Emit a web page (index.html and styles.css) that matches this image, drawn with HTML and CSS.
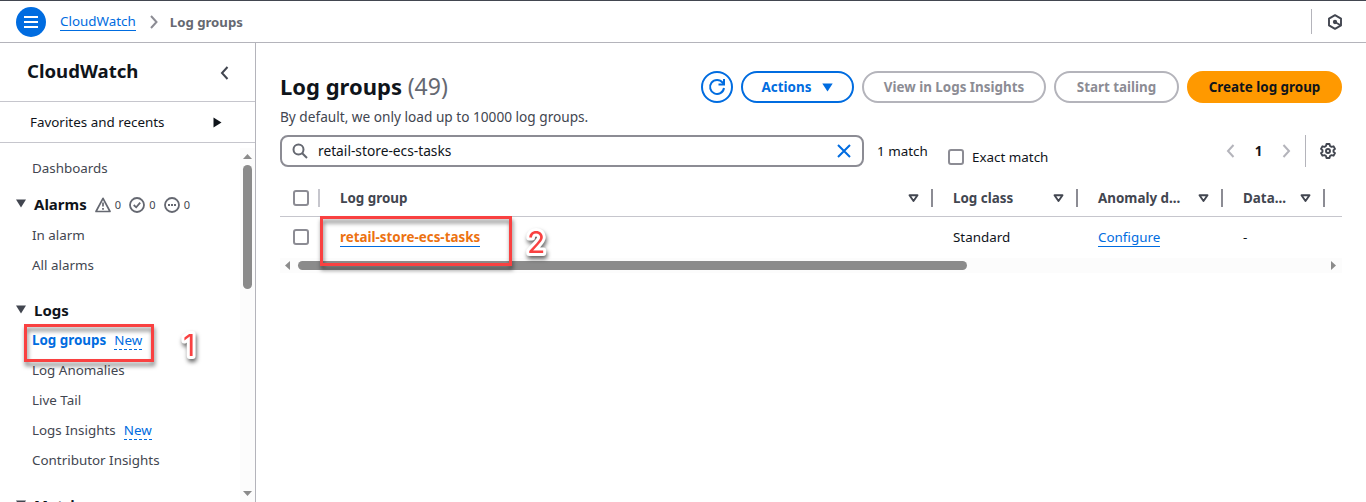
FILE: index.html
```html
<!DOCTYPE html>
<html lang="en">
<head>
<meta charset="utf-8">
<title>CloudWatch - Log groups</title>
<link rel="stylesheet" href="styles.css">
</head>
<body>
<div class="app">
  <header class="topbar">
    <button class="menu-btn" aria-label="Menu"><svg width="14" height="12" viewBox="0 0 14 12" stroke="#fff" stroke-width="2"><path d="M0 1h14M0 6h14M0 11h14"/></svg></button>
    <nav class="crumbs">
      <a class="link crumb-link">CloudWatch</a>
      <svg class="crumb-sep" width="8" height="14" viewBox="0 0 8 14" fill="none" stroke="#8c8c94" stroke-width="2"><path d="M1 1l5.500 6L1 13"/></svg>
      <span class="crumb-current">Log groups</span>
    </nav>
    <div class="topbar-tools">
      <svg width="16" height="16" viewBox="0 0 16 16" fill="none" stroke="#424650" stroke-width="1.900" stroke-linejoin="round"><path d="M8 1.200l6 3.400v6.800l-6 3.400-6-3.400V4.600z"/><path d="M8 8l5.500 3.200"/><circle cx="8" cy="8" r="1.200" fill="#424650"/></svg>
    </div>
  </header>
  <div class="body">
    <aside class="sidebar">
      <div class="side-head"><h2 class="side-title">CloudWatch</h2><svg class="collapse" width="9" height="14" viewBox="0 0 9 14" fill="none" stroke="#424650" stroke-width="2"><path d="M7.500 1L2 7l5.500 6"/></svg></div>
      <div class="favorites"><span>Favorites and recents</span><svg width="9" height="11" viewBox="0 0 9 11"><path d="M0.500 0.500v10L8.500 5.500z" fill="#0f141a"/></svg></div>
      <div class="side-scroll">
        <div class="nav-list">
          <a class="nav-item">Dashboards</a>
          <div class="nav-group alarms">
            <svg class="caret" width="10" height="9" viewBox="0 0 10 9"><path d="M0 0.500h10L5 8.500z" fill="#424650"/></svg>
            <span class="group-title">Alarms</span>
            <span class="counts">
              <svg width="16" height="16" viewBox="0 0 16 16" fill="none" stroke="#656871" stroke-width="1.700" stroke-linejoin="round"><path d="M8 1.300L15 14.500H1z"/><path d="M8 5.500v4M8 11v1.800"/></svg><span class="count">0</span>
              <svg width="16" height="16" viewBox="0 0 16 16" fill="none" stroke="#656871" stroke-width="1.800"><circle cx="8" cy="8" r="7"/><path d="M4.700 8l2.500 2.300 4-4.600"/></svg><span class="count">0</span>
              <svg width="16" height="16" viewBox="0 0 16 16" fill="none" stroke="#656871" stroke-width="1.800"><circle cx="8" cy="8" r="7"/><path d="M4 8h2M7 8h2M10 8h2"/></svg><span class="count">0</span>
            </span>
          </div>
          <a class="nav-item">In alarm</a>
          <a class="nav-item">All alarms</a>
          <div class="nav-group spaced">
            <svg class="caret" width="10" height="9" viewBox="0 0 10 9"><path d="M0 0.500h10L5 8.500z" fill="#424650"/></svg>
            <span class="group-title">Logs</span>
          </div>
          <a class="nav-item"><span class="active">Log groups</span><span class="new">New</span></a>
          <a class="nav-item">Log Anomalies</a>
          <a class="nav-item">Live Tail</a>
          <a class="nav-item">Logs Insights<span class="new">New</span></a>
          <a class="nav-item">Contributor Insights</a>
          <div class="nav-group spaced">
            <svg class="caret" width="10" height="9" viewBox="0 0 10 9"><path d="M0 0.500h10L5 8.500z" fill="#424650"/></svg>
            <span class="group-title">Metrics</span>
          </div>
        </div>
        <div class="vbar">
          <svg width="9" height="5" viewBox="0 0 9 5"><path d="M0 5h9L4.500 0z" fill="#8b8b8b"/></svg>
          <div class="vthumb"></div>
          <svg class="vdown" width="9" height="5" viewBox="0 0 9 5"><path d="M0 0h9L4.500 5z" fill="#8b8b8b"/></svg>
        </div>
      </div>
    </aside>
    <main class="main">
      <div class="title-row">
        <div class="title-block">
          <h1 class="title">Log groups <span class="title-count">(49)</span></h1>
          <p class="desc">By default, we only load up to 10000 log groups.</p>
        </div>
        <div class="actions">
          <button class="btn refresh" aria-label="Refresh"><svg width="18" height="18" viewBox="0 0 18 18" fill="none" stroke="#006ce0" stroke-width="2"><path d="M16 10A7 7 0 1 1 14.600 4.600L15.800 6"/><path d="M16 1v5.500h-5.500"/></svg></button>
          <button class="btn act">Actions<svg width="11" height="9" viewBox="0 0 11 9"><path d="M0.300 0.500h10.400L5.500 8.500z" fill="#006ce0"/></svg></button>
          <button class="btn disabled insights">View in Logs Insights</button>
          <button class="btn disabled tailing">Start tailing</button>
          <button class="btn primary">Create log group</button>
        </div>
      </div>
      <div class="filter-row">
        <div class="search">
          <svg width="16" height="16" viewBox="0 0 16 16" fill="none" stroke="#656871" stroke-width="2"><circle cx="6.500" cy="6.500" r="5"/><path d="M10.200 10.200l4.800 4.800"/></svg>
          <span class="search-text">retail-store-ecs-tasks</span>
          <svg width="14" height="14" viewBox="0 0 14 14" stroke="#006ce0" stroke-width="2"><path d="M1 1l12 12M13 1L1 13"/></svg>
        </div>
        <span class="match">1 match</span>
        <label class="exact"><span class="check"></span>Exact match</label>
        <div class="pager">
          <svg width="9" height="14" viewBox="0 0 9 14" fill="none" stroke="#b4b4bb" stroke-width="2"><path d="M7.500 1L2 7l5.500 6"/></svg>
          <span class="page">1</span>
          <svg width="9" height="14" viewBox="0 0 9 14" fill="none" stroke="#b4b4bb" stroke-width="2"><path d="M1.500 1L7 7l-5.500 6"/></svg>
        </div>
        <div class="prefs"><svg width="16" height="16" viewBox="0 0 16 16" fill="none" stroke="#424650" stroke-width="1.900" stroke-linejoin="round"><path d="M6.500 1h3l.5 2 1.500.9 2-.6 1.500 2.600-1.500 1.400v1.400l1.500 1.400-1.500 2.600-2-.6-1.500.9-.5 2h-3l-.5-2-1.500-.9-2 .6L1 10.100l1.500-1.400V7.300L1 5.900l1.500-2.600 2 .6L6 3z"/><circle cx="8" cy="8" r="2"/></svg></div>
      </div>
      <div class="table">
        <div class="row head">
          <div class="cell sel"><span class="check"></span></div>
          <div class="cell group">Log group<svg class="sort" width="11" height="9" viewBox="0 0 11 9"><path d="M1.500 1.300h8L5.500 7z"/></svg></div>
          <div class="cell class">Log class<svg class="sort" width="11" height="9" viewBox="0 0 11 9"><path d="M1.500 1.300h8L5.500 7z"/></svg></div>
          <div class="cell anomaly">Anomaly d...<svg class="sort" width="11" height="9" viewBox="0 0 11 9"><path d="M1.500 1.300h8L5.500 7z"/></svg></div>
          <div class="cell data">Data...<svg class="sort" width="11" height="9" viewBox="0 0 11 9"><path d="M1.500 1.300h8L5.500 7z"/></svg></div>
        </div>
        <div class="row item">
          <div class="cell sel"><span class="check"></span></div>
          <div class="cell group"><a class="group-link">retail-store-ecs-tasks</a></div>
          <div class="cell class">Standard</div>
          <div class="cell anomaly"><a class="link">Configure</a></div>
          <div class="cell data">-</div>
        </div>
        <div class="hbar">
          <svg width="5" height="9" viewBox="0 0 5 9"><path d="M5 0v9L0 4.500z" fill="#8b8b8b"/></svg>
          <div class="hthumb"></div>
          <svg class="hright" width="5" height="9" viewBox="0 0 5 9"><path d="M0 0v9L5 4.500z" fill="#8b8b8b"/></svg>
        </div>
      </div>
    </main>
  </div>
  <div class="mark-box box-one"></div>
  <div class="mark-box box-two"></div>
  <svg class="mark-num num-one" width="34" height="42"><text x="7" y="32">1</text></svg>
  <svg class="mark-num num-two" width="36" height="40"><text x="8" y="30">2</text></svg>
</div>
</body>
</html>
```
FILE: styles.css
```css
* { box-sizing: border-box; }
body {
  margin: 0;
  background: #fff;
  color: #0f141a;
  font-family: "Noto Sans", "Open Sans", sans-serif;
  font-size: 13.4px;
  line-height: 20px;
}
button { font: inherit; cursor: pointer; }
svg { display: block; flex: none; }
.app { position: relative; width: 1366px; height: 502px; overflow: hidden; display: flex; flex-direction: column; }
.topbar { display: flex; align-items: center; height: 43px; flex: none; padding-left: 16px; border-top: 1px solid #424650; border-bottom: 1px solid #b4b4bb; }
.menu-btn { width: 30px; height: 30px; border: 0; border-radius: 50%; background: #006ce0; padding: 0; display: flex; align-items: center; justify-content: center; }
.crumbs { display: flex; align-items: center; margin-left: 14px; }
.link { color: #006ce0; line-height: 18px; border-bottom: 1px solid #006ce0; }
.crumb-sep { margin: 0 12px 0 14px; }
.crumb-current { color: #656871; font-weight: 700; font-size: 13.2px; }
.topbar-tools { margin-left: auto; width: 55px; height: 25px; border-left: 1px solid #b4b4bb; display: flex; align-items: center; padding-left: 15px; }

.body { display: flex; flex: 1; min-height: 0; }
.sidebar { width: 256px; flex: none; border-right: 1px solid #b4b4bb; display: flex; flex-direction: column; }
.side-head { height: 59px; flex: none; padding: 0 26px 2px 27px; border-bottom: 1px solid #c6c6cd; display: flex; align-items: center; justify-content: space-between; }
.side-title { margin: 0; font-size: 18.6px; line-height: 24px; }
.collapse { margin-top: 3px; }
.favorites { height: 41px; flex: none; padding: 0 33px 0 30px; border-bottom: 1px solid #c6c6cd; display: flex; align-items: center; justify-content: space-between; }
.side-scroll { flex: 1; min-height: 0; display: flex; overflow: hidden; }
.nav-list { flex: 1; padding-top: 10px; }
.nav-item { height: 30px; padding-left: 32px; display: flex; align-items: center; color: #424650; white-space: nowrap; }
.nav-group { height: 30px; padding-left: 16px; display: flex; align-items: center; gap: 8px; }
.nav-group.alarms { margin: 6px 0 1px; }
.nav-group.spaced { margin-top: 15px; }
.caret { margin-top: -1px; }
.group-title { font-size: 15px; font-weight: 700; }
.counts { display: flex; align-items: center; gap: 4px; font-size: 11px; color: #424650; margin-top: 1px; }
.count { width: 8px; margin-right: 2.500px; line-height: 16px; }
.active { color: #006ce0; font-weight: 700; }
.new { color: #006ce0; margin-left: 8px; margin-top: 1px; line-height: 17px; border-bottom: 1px dashed #006ce0; }
.vbar { width: 15px; margin-top: 5px; background: #fcfcfc; display: flex; flex-direction: column; align-items: center; padding: 6px 0 6px; }
.vthumb { width: 9px; height: 124px; margin-top: 6px; border-radius: 5px; background: #8b8b8b; }
.vdown { margin-top: auto; }

.main { flex: 1; min-width: 0; padding: 28px 24px 0; }
.title-row { display: flex; justify-content: space-between; height: 64px; }
.title { margin: -1px 0 0; font-size: 22px; line-height: 32px; }
.title-count { color: #656871; font-weight: 400; font-size: 23px; }
.desc { margin: 5px 0 0; color: #424650; font-size: 13.650px; }
.actions { display: flex; gap: 8px; height: 32px; }
.btn { height: 32px; border-radius: 16px; border: 2px solid #006ce0; background: #fff; color: #006ce0; font-weight: 700; padding: 0; display: flex; align-items: center; justify-content: center; white-space: nowrap; }
.refresh { width: 32px; }
.act { width: 113px; gap: 11px; }
.btn.disabled { border-color: #b4b4bb; color: #8c8c94; }
.insights { width: 184px; }
.tailing { width: 125px; }
.btn.primary { width: 155px; border-color: #ff9900; background: #ff9900; color: #0f141a; }
.filter-row { display: flex; align-items: center; height: 32px; }
.search { width: 584px; height: 32px; border: 2px solid #8c8c94; border-radius: 8px; display: flex; align-items: center; padding: 0 11px 0 10px; }
.search-text { flex: 1; margin-left: 10px; font-size: 13.750px; }
.match { width: 71px; margin-left: 13px; }
.exact { display: flex; align-items: center; gap: 8px; margin-top: 12px; }
.check { width: 16px; height: 16px; border: 2px solid #8c8c94; border-radius: 3px; background: #fff; flex: none; }
.pager { margin-left: auto; display: flex; align-items: center; width: 79px; padding: 0 14px 0 0; justify-content: space-between; font-weight: 700; }
.prefs { height: 32px; width: 37px; padding-left: 14px; border-left: 1px solid #b4b4bb; display: flex; align-items: center; }

.table { margin-top: 13px; width: 1062px; overflow: hidden; }
.row { display: flex; height: 41px; }
.row.head { height: 37px; border-bottom: 1px solid #c6c6cd; color: #424650; font-weight: 700; }
.row.item { padding-bottom: 1px; }
.cell { display: flex; align-items: center; flex: none; position: relative; white-space: nowrap; }
.sel { width: 40px; padding-left: 13px; }
.group { width: 613px; padding-left: 20px; }
.class { width: 145px; padding-left: 20px; }
.anomaly { width: 145px; padding-left: 20px; }
.data { width: 102px; padding-left: 20px; }
.head .cell { border-right: 2px solid transparent; background: linear-gradient(#8c8c94, #8c8c94) right 0 top 9px / 2px 18px no-repeat; background-origin: border-box; }
.head .sel { background-image: linear-gradient(#c6c6cd, #c6c6cd); }
.sort { margin-left: auto; margin-right: 12.500px; fill: none; stroke: #424650; stroke-width: 1.900; stroke-linejoin: round; }
.group-link { color: #ec7211; font-weight: 700; line-height: 18px; border-bottom: 1px solid #006ce0; }
.hbar { height: 15px; background: #fcfcfc; display: flex; align-items: center; padding: 0 6px 0 5px; }
.hthumb { width: 669px; height: 9px; border-radius: 5px; background: #8b8b8b; margin-left: 8px; }
.hright { margin-left: auto; }

.mark-box { position: absolute; border: 3px solid #f94141; filter: drop-shadow(1px 4px 2px rgba(0,0,0,.5)); }
.box-one { left: 24px; top: 324px; width: 130px; height: 38px; }
.box-two { left: 320px; top: 216px; width: 192px; height: 50px; }
.mark-num { position: absolute; filter: drop-shadow(1px 3px 2px rgba(0,0,0,.6)); }
.mark-num text { font-family: "Inter", "Liberation Sans", sans-serif; font-size: 30px; fill: #f94141; stroke: #fff; stroke-width: 6px; stroke-linejoin: round; paint-order: stroke; }
.num-one { left: 176px; top: 324px; }
.num-two { left: 519px; top: 223px; }
```
